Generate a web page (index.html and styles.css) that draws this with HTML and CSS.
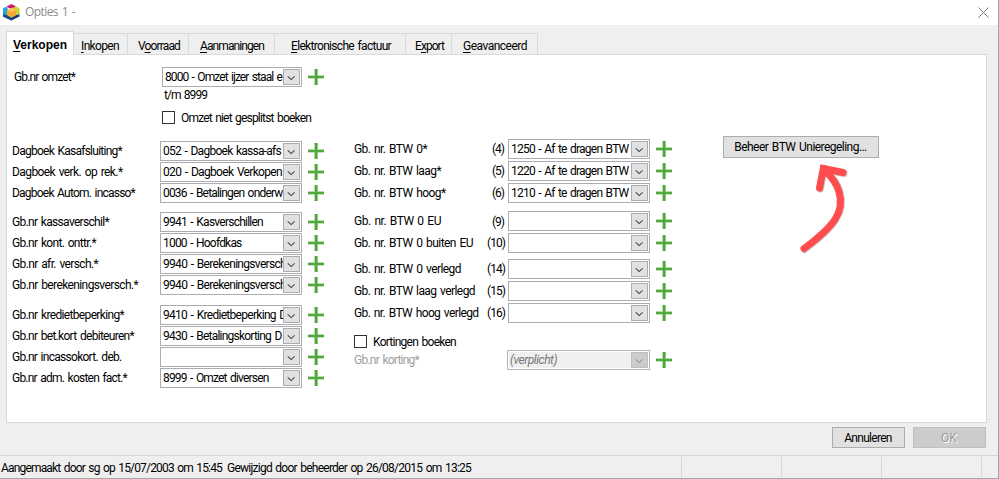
FILE: index.html
```html
<!DOCTYPE html>
<html lang="nl">
<head>
<meta charset="utf-8">
<title>Opties 1 -</title>
<link rel="stylesheet" href="styles.css">
</head>
<body>
<svg class="defs" width="0" height="0">
  <symbol id="plus" viewBox="0 0 16 16"><path d="M6 0h1v16H6zM0 6h16v1H0z" fill="#b5dcab"/><path d="M7 0h2v16H7zM0 7h16v2H0z" fill="#4fa83b"/><path d="M9 0h1v7H9zM9 9h1v7H9zM0 9h7v.5H0zM9 9h7v.5H9z" fill="#8cc67e"/></symbol>
  <symbol id="chev" viewBox="0 0 17 16"><path d="M4.200 7.200l3.900 3.700 3.900-3.700" fill="none" stroke="currentColor" stroke-width="1.2"/></symbol>
</svg>
<div class="window">
  <header class="titlebar">
    <svg class="logo" width="17" height="17" viewBox="0 0 17 17">
      <path d="M0 10l4 1 4.500 2.500 4.500-2.500 3.500-1v2.500L8.500 16.500 0 12.500z" fill="#123c6e"/>
      <path d="M0 9.500l4 1.500 4.500 2.500v3L0 12.500z" fill="#1b4c86"/>
      <path d="M0 4.200L4 2.500l1 3.500-1 5-4-1z" fill="#23a6df"/>
      <path d="M3.500 2.500L8.500 0l4.500 2.500-4.500 3z" fill="#d6127c"/>
      <path d="M13 2.500l3.500 1.700V10L13 11l-1.500-5-2-2z" fill="#c4d62f"/>
      <path d="M8.500 3.800L13 6.200v4.900l-4.500 2.600L4 11.100V6.200z" fill="#f3a92b"/>
      <path d="M8.500 3.800L13 6.200 8.500 8.600 4 6.200z" fill="#fbc35a"/>
    </svg>
    <span class="title" data-w="50">Opties 1 -</span>
    <svg class="close" width="11" height="11" viewBox="0 0 11 11"><path d="M.5.5l10 10M10.500.5l-10 10" stroke="#777" stroke-width="1"/></svg>
  </header>

  <nav class="tabs">
    <div class="tab active"><span data-w="54"><u>V</u>erkopen</span></div>
    <div class="tab t2"><span data-w="38"><u>I</u>nkopen</span></div>
    <div class="tab t3"><span data-w="42">V<u>o</u>orraad</span></div>
    <div class="tab t4"><span data-w="64"><u>A</u>anmaningen</span></div>
    <div class="tab t5"><span data-w="100"><u>E</u>lektronische factuur</span></div>
    <div class="tab t6"><span data-w="29">E<u>x</u>port</span></div>
    <div class="tab t7"><span data-w="64"><u>G</u>eavanceerd</span></div>
  </nav>

  <main class="panel">
    <section class="left">
      <div class="row first"><label><span data-w="61">Gb.nr omzet*</span></label><div class="combo"><span data-w="117">8000 - Omzet ijzer staal e</span><svg><use href="#chev"/></svg></div><svg class="plus"><use href="#plus"/></svg></div>
      <div class="hint"><span data-w="43">t/m 8999</span></div>
      <div class="check split"><i></i><span data-w="130">Omzet niet gesplitst boeken</span></div>

      <div class="group">
        <div class="row"><label><span data-w="110">Dagboek Kasafsluiting*</span></label><div class="combo"><span data-w="118">052 - Dagboek kassa-afs</span><svg><use href="#chev"/></svg></div><svg class="plus"><use href="#plus"/></svg></div>
        <div class="row"><label><span data-w="110.5">Dagboek verk. op rek.*</span></label><div class="combo"><span data-w="119">020 - Dagboek Verkopen</span><svg><use href="#chev"/></svg></div><svg class="plus"><use href="#plus"/></svg></div>
        <div class="row"><label><span data-w="123">Dagboek Autom. incasso*</span></label><div class="combo"><span data-w="119.5">0036 - Betalingen onderw</span><svg><use href="#chev"/></svg></div><svg class="plus"><use href="#plus"/></svg></div>
      </div>
      <div class="group g2">
        <div class="row"><label><span data-w="97">Gb.nr kassaverschil*</span></label><div class="combo"><span data-w="100">9941 - Kasverschillen</span><svg><use href="#chev"/></svg></div><svg class="plus"><use href="#plus"/></svg></div>
        <div class="row"><label><span data-w="84">Gb.nr kont. onttr.*</span></label><div class="combo"><span data-w="78.5">1000 - Hoofdkas</span><svg><use href="#chev"/></svg></div><svg class="plus"><use href="#plus"/></svg></div>
        <div class="row"><label><span data-w="86">Gb.nr afr. versch.*</span></label><div class="combo"><span data-w="123">9940 - Berekeningsversch</span><svg><use href="#chev"/></svg></div><svg class="plus"><use href="#plus"/></svg></div>
        <div class="row"><label><span data-w="126">Gb.nr berekeningsversch.*</span></label><div class="combo"><span data-w="123">9940 - Berekeningsversch</span><svg><use href="#chev"/></svg></div><svg class="plus"><use href="#plus"/></svg></div>
      </div>
      <div class="group g3">
        <div class="row"><label><span data-w="112">Gb.nr kredietbeperking*</span></label><div class="combo"><span data-w="123.5">9410 - Kredietbeperking D</span><svg><use href="#chev"/></svg></div><svg class="plus"><use href="#plus"/></svg></div>
        <div class="row"><label><span data-w="122">Gb.nr bet.kort debiteuren*</span></label><div class="combo"><span data-w="118.5">9430 - Betalingskorting D</span><svg><use href="#chev"/></svg></div><svg class="plus"><use href="#plus"/></svg></div>
        <div class="row"><label><span data-w="109.5">Gb.nr incassokort. deb.</span></label><div class="combo"><span></span><svg><use href="#chev"/></svg></div><svg class="plus"><use href="#plus"/></svg></div>
        <div class="row"><label><span data-w="115">Gb.nr adm. kosten fact.*</span></label><div class="combo"><span data-w="105.5">8999 - Omzet diversen</span><svg><use href="#chev"/></svg></div><svg class="plus"><use href="#plus"/></svg></div>
      </div>
    </section>

    <section class="right">
      <div class="group">
        <div class="row"><label><span data-w="73">Gb. nr. BTW 0*</span></label><b><span data-w="12">(4)</span></b><div class="combo"><span data-w="117.5">1250 - Af te dragen BTW</span><svg><use href="#chev"/></svg></div><svg class="plus"><use href="#plus"/></svg></div>
        <div class="row"><label><span data-w="87">Gb. nr. BTW laag*</span></label><b><span data-w="12">(5)</span></b><div class="combo"><span data-w="117.5">1220 - Af te dragen BTW</span><svg><use href="#chev"/></svg></div><svg class="plus"><use href="#plus"/></svg></div>
        <div class="row"><label><span data-w="91.5">Gb. nr. BTW hoog*</span></label><b><span data-w="12">(6)</span></b><div class="combo"><span data-w="117.5">1210 - Af te dragen BTW</span><svg><use href="#chev"/></svg></div><svg class="plus"><use href="#plus"/></svg></div>
      </div>
      <div class="group g2">
        <div class="row"><label><span data-w="87">Gb. nr. BTW 0 EU</span></label><b class="low"><span data-w="12">(9)</span></b><div class="combo"><span></span><svg><use href="#chev"/></svg></div><svg class="plus"><use href="#plus"/></svg></div>
        <div class="row"><label><span data-w="119">Gb. nr. BTW 0 buiten EU</span></label><b class="wide"><span data-w="18">(10)</span></b><div class="combo"><span></span><svg><use href="#chev"/></svg></div><svg class="plus"><use href="#plus"/></svg></div>
      </div>
      <div class="group g3">
        <div class="row"><label><span data-w="107">Gb. nr. BTW 0 verlegd</span></label><b class="wide"><span data-w="18">(14)</span></b><div class="combo"><span></span><svg><use href="#chev"/></svg></div><svg class="plus"><use href="#plus"/></svg></div>
        <div class="row"><label><span data-w="121">Gb. nr. BTW laag verlegd</span></label><b class="wide"><span data-w="18">(15)</span></b><div class="combo"><span></span><svg><use href="#chev"/></svg></div><svg class="plus"><use href="#plus"/></svg></div>
        <div class="row"><label><span data-w="124.5">Gb. nr. BTW hoog verlegd</span></label><b class="wide"><span data-w="18">(16)</span></b><div class="combo"><span></span><svg><use href="#chev"/></svg></div><svg class="plus"><use href="#plus"/></svg></div>
      </div>
      <div class="check"><i></i><span data-w="83">Kortingen boeken</span></div>
      <div class="row off"><label><span data-w="65">Gb.nr korting*</span></label><div class="combo"><span data-w="47">(verplicht)</span><svg><use href="#chev"/></svg></div><svg class="plus"><use href="#plus"/></svg></div>
    </section>

    <aside class="side">
      <div class="button"><span data-w="132.5">Beheer BTW Unieregeling...</span></div>
      <svg class="arrow" width="60" height="100" viewBox="790 160 60 100">
        <path class="shade" d="M804.500 249.500C834.500 227 846 212 840 192Q837 181 826 171M820.300 189L824 169.500 844 173.500"/>
        <path class="ink" d="M804 248.500C834 226 845 212 839 192Q836 181 825 171M819.500 188L823.300 168.500 843 172.500"/>
        <path class="tip" d="M821 164.700L826 165.800 824 170 820 171z"/>
      </svg>
    </aside>
  </main>

  <div class="actions">
    <div class="button"><span data-w="47.500">Annuleren</span></div>
    <div class="button disabled"><span data-w="16">OK</span></div>
  </div>

  <footer class="status">
    <div class="info"><span data-w="221">Aangemaakt door sg op 15/07/2003 om 15:45</span><span data-w="244">Gewijzigd door beheerder op 26/08/2015 om 13:25</span></div>
    <div class="cell"></div><div class="cell"></div><div class="cell"></div><div class="cell end"></div>
  </footer>
</div>
<script src="fit.js"></script>
</body>
</html>
```
FILE: styles.css
```css
* { box-sizing: border-box; }
body { margin: 0; background: #efefef; }
.defs { position: absolute; }
.window {
  width: 999px; height: 479px; overflow: hidden;
  display: flex; flex-direction: column;
  border-right: 1px solid #a0a0a0; border-bottom: 1px solid #a5a5a5;
  background: #efefef; color: #000;
  font: 12px/16px Roboto, "Liberation Sans", sans-serif;
  word-spacing: 1.2px;
}
span { white-space: nowrap; }
[data-w] { display: inline-block; }
u { text-decoration: underline; text-underline-offset: 2px; text-decoration-thickness: 1px; }

.titlebar { height: 25px; flex: none; background: #fff; display: flex; padding-left: 3px; }
.logo { margin-top: 4px; }
.title { margin: 4px 0 0 5px; font: 12px/16px "Open Sans", sans-serif; color: #8c8c8c; }
.close { margin: 7px 9px 0 auto; }

.tabs { height: 30px; flex: none; display: flex; align-items: flex-end; padding-left: 6px; position: relative; z-index: 1; margin-bottom: -1px; }
.tab { height: 22px; border: 1px solid #d9d9d9; border-left: 0; padding: 4px 0 0 7px; background: #efefef; }
.tab.active { width: 68px; height: 24px; border-left: 1px solid #d9d9d9; border-bottom-color: #fff; background: #fff; font: bold 12px/16px "Liberation Sans", sans-serif; padding: 5px 0 0 6px; }
.t2 { width: 54px; }
.t3 { width: 61px; padding-left: 10px; }
.t4 { width: 86px; padding-left: 11px; }
.t5 { width: 131px; padding-left: 16px; }
.t6 { width: 46px; padding-left: 9px; }
.t7 { width: 86px; padding-left: 11px; }

.panel { width: 981px; height: 369px; flex: none; margin-left: 6px; border: 1px solid #d9d9d9; background: #fff; display: flex; }
.left { width: 347px; padding: 12px 0 0 5px; }
.row { display: flex; height: 20px; }
.row label { width: 148px; padding-top: 2px; }
.group { display: grid; gap: 1px; }
.combo { width: 142px; height: 20px; border: 1px solid #abadb3; display: flex; padding: 1px 1px 0 2px; overflow: hidden; }
.combo span { flex: 1; width: 0; overflow: hidden; height: 17px; line-height: 17px; }
.combo svg { flex: none; width: 17px; height: 16px; border: 1px solid #adadad; background: #e1e1e1; color: #444; }
.plus { width: 16px; height: 16px; margin: 2px 0 0 6px; }
.first label { width: 150px; padding-left: 2px; }
.first .combo { width: 140px; }
.hint { height: 16px; margin: 0 0 0 152px; }
.check { display: flex; height: 13px; }
.check i { width: 13px; height: 13px; border: 1px solid #333; }
.check span { margin-left: 6px; line-height: 15px; }
.split { margin: 8px 0 17px 150px; }
.left .g2 { margin-top: 9px; }
.left .g3 { margin-top: 10px; }

.right { width: 342px; padding: 84px 0 0; }
.right .group { gap: 2px; }
.right .group label { width: 133px; padding-top: 2px; }
.right .row b { width: 21px; padding: 2px 4px 0 0; font-weight: 400; text-align: right; }
.right .row b.low { padding-top: 3px; }
.right .row b.wide { padding-right: 3px; }
.right .g2 { margin-top: 8px; }
.right .g3 { margin-top: 6px; }
.right .check { margin-top: 12px; }
.right .off { margin-top: 2px; }
.right .off label { width: 153px; padding-top: 2px; color: #a0a0a0; }
.off .combo { width: 143px; background: #efefef; border-color: #b4b4b4; box-shadow: inset 0 0 0 1px #fff; }
.off .combo span { font-style: italic; color: #777; }
.off .combo svg { background: #ccc; border-color: #bfbfbf; color: #999; }

.button { display: flex; justify-content: center; align-items: center; border: 1px solid #adadad; background: #e1e1e1; }
.side { padding: 81px 0 0 27px; }
.side .button { width: 156px; height: 22px; padding-right: 1px; }
.arrow { display: block; margin: 2px 0 0 67px; }
.arrow path { fill: none; stroke-width: 7; stroke-linecap: round; }
.arrow .shade { stroke: #ccbcbc; }
.arrow .ink { stroke: #ff4d4d; }
.arrow .tip { fill: #ff4d4d; }

.actions { display: flex; justify-content: flex-end; gap: 8px; padding: 4px 12px 0 0; height: 32px; flex: none; }
.actions .button { width: 73px; height: 21px; padding-right: 1px; }
.actions .disabled { background: #ccc; border-color: #bfbfbf; color: #9a9a9a; text-shadow: 1px 1px #fff; }

.status { flex: 1; display: flex; border-top: 1px solid #d7d7d7; }
.info { width: 681px; display: flex; gap: 5px; padding: 4px 0 0 1px; }
.cell { width: 100px; height: 20px; margin-top: 1px; border-left: 1px solid #d7d7d7; }
.end { width: 17px; }
```
FILE: fit.js
```js
document.querySelectorAll('[data-w]').forEach(function (el) {
  var range = document.createRange();
  range.selectNodeContents(el);
  var width = range.getBoundingClientRect().width;
  var count = el.textContent.length;
  el.style.letterSpacing = ((parseFloat(el.dataset.w) - width) / count).toFixed(3) + 'px';
});
```
